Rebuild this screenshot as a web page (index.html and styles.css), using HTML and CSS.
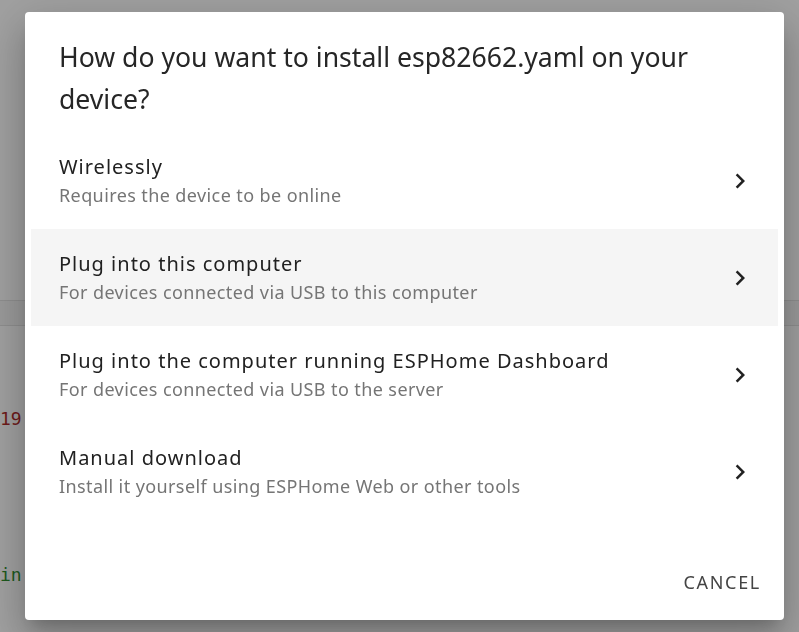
FILE: index.html
```html
<!DOCTYPE html>
<html lang="en">
<head>
    <meta charset="UTF-8">
    <meta name="viewport" content="width=device-width, initial-scale=1.0">
    <title>Install</title>
    <link rel="stylesheet" href="styles.css">
</head>
<body>
    <!-- page behind the dialog -->
    <div class="page">
        <div class="toolbar"></div>
        <pre class="code"><span class="str">19'</span></pre>
        <pre class="code code-low"><span class="kw">in</span></pre>
    </div>

    <div class="overlay">
        <div class="dialog">
            <h2 class="dialog-title">How do you want to install esp82662.yaml on your device?</h2>

            <ul class="options">
                <li class="option">
                    <div class="option-text">
                        <span class="option-name">Wirelessly</span>
                        <span class="option-desc">Requires the device to be online</span>
                    </div>
                    <svg class="chevron" viewBox="0 0 24 24"><path d="M10 6L8.59 7.41 13.17 12l-4.58 4.59L10 18l6-6z"/></svg>
                </li>
                <li class="option option-active">
                    <div class="option-text">
                        <span class="option-name">Plug into this computer</span>
                        <span class="option-desc">For devices connected via USB to this computer</span>
                    </div>
                    <svg class="chevron" viewBox="0 0 24 24"><path d="M10 6L8.59 7.41 13.17 12l-4.58 4.59L10 18l6-6z"/></svg>
                </li>
                <li class="option">
                    <div class="option-text">
                        <span class="option-name">Plug into the computer running ESPHome Dashboard</span>
                        <span class="option-desc">For devices connected via USB to the server</span>
                    </div>
                    <svg class="chevron" viewBox="0 0 24 24"><path d="M10 6L8.59 7.41 13.17 12l-4.58 4.59L10 18l6-6z"/></svg>
                </li>
                <li class="option">
                    <div class="option-text">
                        <span class="option-name">Manual download</span>
                        <span class="option-desc">Install it yourself using ESPHome Web or other tools</span>
                    </div>
                    <svg class="chevron" viewBox="0 0 24 24"><path d="M10 6L8.59 7.41 13.17 12l-4.58 4.59L10 18l6-6z"/></svg>
                </li>
            </ul>

            <div class="actions">
                <button class="btn-cancel">Cancel</button>
            </div>
        </div>
    </div>
</body>
</html>
```

FILE: styles.css
```css
body {
    margin: 0;
    height: 632px;
    overflow: hidden;
    font-family: 'Noto Sans', 'Liberation Sans', sans-serif;
    background-color: #a1a1a1;
}

/* background page, already dimmed by the scrim */
.page {
    padding-top: 300px;
}

.toolbar {
    height: 24px;
    border-top: 1px solid #8f8f8f;
    border-bottom: 1px solid #8f8f8f;
    background-color: #9b9b9b;
}

.code {
    margin: 0;
    padding-top: 80px;
    font-family: 'DejaVu Sans Mono', monospace;
    font-size: 18px;
    line-height: 26px;
}

.code-low {
    padding-top: 130px;
}

.str {
    color: #6e1a1a;
}

.kw {
    color: #1d5a1d;
}

.overlay {
    position: fixed;
    top: 0;
    left: 0;
    right: 0;
    bottom: 0;
    padding: 12px 15px 12px 25px;
    display: flex;
}

.dialog {
    flex: 1;
    background-color: #fff;
    border-radius: 4px;
    box-shadow: 0 11px 15px -7px rgba(0, 0, 0, 0.2),
                0 24px 38px 3px rgba(0, 0, 0, 0.14),
                0 9px 46px 8px rgba(0, 0, 0, 0.12);
    display: flex;
    flex-direction: column;
}

.dialog-title {
    margin: 0;
    padding: 24px 40px 0 34px;
    font-size: 26.6px;
    font-weight: 400;
    line-height: 42px;
    color: #262626;
}

.options {
    list-style: none;
    margin: 0;
    padding: 12px 6px 0 6px;
}

.option {
    height: 97px;
    padding: 0 23px 0 28px;
    display: flex;
    align-items: center;
}

.option-active {
    background-color: #f5f5f5;
}

.option-text {
    flex: 1;
    display: flex;
    flex-direction: column;
}

.option-name {
    font-size: 20px;
    line-height: 28px;
    letter-spacing: 1px;
    color: #212121;
}

.option-desc {
    font-size: 18px;
    line-height: 28px;
    letter-spacing: 0.4px;
    color: #757575;
}

.chevron {
    width: 30px;
    height: 30px;
    fill: #212121;
}

.actions {
    margin-top: auto;
    padding: 0 15px 18px 0;
    display: flex;
    justify-content: flex-end;
}

.btn-cancel {
    background: none;
    border: none;
    padding: 8px;
    font-family: 'Noto Sans', 'Liberation Sans', sans-serif;
    font-size: 18px;
    letter-spacing: 1.7px;
    text-transform: uppercase;
    color: #444;
    cursor: pointer;
}
```
